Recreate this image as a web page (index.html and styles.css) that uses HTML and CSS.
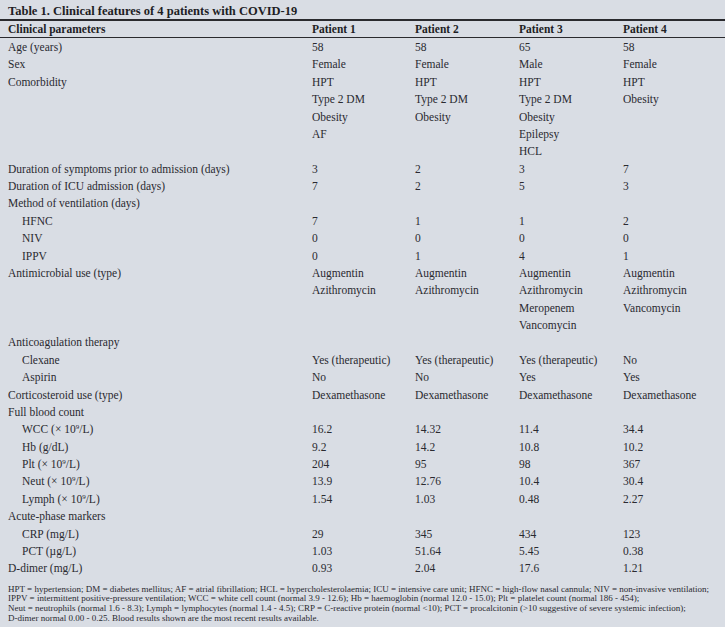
FILE: index.html
```html
<!DOCTYPE html>
<html lang="en">
<head>
<meta charset="utf-8">
<title>Table 1. Clinical features of 4 patients with COVID-19</title>
<link rel="stylesheet" href="styles.css">
</head>
<body>
<div class="page">
  <h1 class="caption">Table 1. Clinical features of 4 patients with COVID-19</h1>
  <table class="clin">
    <colgroup>
      <col class="c-label"><col class="c-p1"><col class="c-p2"><col class="c-p3"><col class="c-p4">
    </colgroup>
    <thead>
      <tr><th class="lbl">Clinical parameters</th><th>Patient 1</th><th>Patient 2</th><th>Patient 3</th><th>Patient 4</th></tr>
    </thead>
    <tbody>
      <tr><td class="lbl">Age (years)</td><td>58</td><td>58</td><td>65</td><td>58</td></tr>
      <tr><td class="lbl">Sex</td><td>Female</td><td>Female</td><td>Male</td><td>Female</td></tr>
      <tr><td class="lbl">Comorbidity</td><td>HPT<br>Type 2 DM<br>Obesity<br>AF</td><td>HPT<br>Type 2 DM<br>Obesity</td><td>HPT<br>Type 2 DM<br>Obesity<br>Epilepsy<br>HCL</td><td>HPT<br>Obesity</td></tr>
      <tr><td class="lbl">Duration of symptoms prior to admission (days)</td><td>3</td><td>2</td><td>3</td><td>7</td></tr>
      <tr><td class="lbl">Duration of ICU admission (days)</td><td>7</td><td>2</td><td>5</td><td>3</td></tr>
      <tr><td class="lbl">Method of ventilation (days)</td><td></td><td></td><td></td><td></td></tr>
      <tr><td class="lbl sub">HFNC</td><td>7</td><td>1</td><td>1</td><td>2</td></tr>
      <tr><td class="lbl sub">NIV</td><td>0</td><td>0</td><td>0</td><td>0</td></tr>
      <tr><td class="lbl sub">IPPV</td><td>0</td><td>1</td><td>4</td><td>1</td></tr>
      <tr><td class="lbl">Antimicrobial use (type)</td><td>Augmentin<br>Azithromycin</td><td>Augmentin<br>Azithromycin</td><td>Augmentin<br>Azithromycin<br>Meropenem<br>Vancomycin</td><td>Augmentin<br>Azithromycin<br>Vancomycin</td></tr>
      <tr><td class="lbl">Anticoagulation therapy</td><td></td><td></td><td></td><td></td></tr>
      <tr><td class="lbl sub">Clexane</td><td>Yes (therapeutic)</td><td>Yes (therapeutic)</td><td>Yes (therapeutic)</td><td>No</td></tr>
      <tr><td class="lbl sub">Aspirin</td><td>No</td><td>No</td><td>Yes</td><td>Yes</td></tr>
      <tr><td class="lbl">Corticosteroid use (type)</td><td>Dexamethasone</td><td>Dexamethasone</td><td>Dexamethasone</td><td>Dexamethasone</td></tr>
      <tr><td class="lbl">Full blood count</td><td></td><td></td><td></td><td></td></tr>
      <tr><td class="lbl sub">WCC (× 10<sup>9</sup>/L)</td><td>16.2</td><td>14.32</td><td>11.4</td><td>34.4</td></tr>
      <tr><td class="lbl sub">Hb (g/dL)</td><td>9.2</td><td>14.2</td><td>10.8</td><td>10.2</td></tr>
      <tr><td class="lbl sub">Plt (× 10<sup>9</sup>/L)</td><td>204</td><td>95</td><td>98</td><td>367</td></tr>
      <tr><td class="lbl sub">Neut (× 10<sup>9</sup>/L)</td><td>13.9</td><td>12.76</td><td>10.4</td><td>30.4</td></tr>
      <tr><td class="lbl sub">Lymph (× 10<sup>9</sup>/L)</td><td>1.54</td><td>1.03</td><td>0.48</td><td>2.27</td></tr>
      <tr><td class="lbl">Acute-phase markers</td><td></td><td></td><td></td><td></td></tr>
      <tr><td class="lbl sub">CRP (mg/L)</td><td>29</td><td>345</td><td>434</td><td>123</td></tr>
      <tr><td class="lbl sub">PCT (µg/L)</td><td>1.03</td><td>51.64</td><td>5.45</td><td>0.38</td></tr>
      <tr><td class="lbl">D-dimer (mg/L)</td><td>0.93</td><td>2.04</td><td>17.6</td><td>1.21</td></tr>
    </tbody>
  </table>
  <p class="notes">HPT = hypertension; DM = diabetes mellitus; AF = atrial fibrillation; HCL = hypercholesterolaemia; ICU = intensive care unit; HFNC = high-flow nasal cannula; NIV = non-invasive ventilation;<br>IPPV = intermittent positive-pressure ventilation; WCC = white cell count (normal 3.9 - 12.6); Hb = haemoglobin (normal 12.0 - 15.0); Plt = platelet count (normal 186 - 454);<br>Neut = neutrophils (normal 1.6 - 8.3); Lymph = lymphocytes (normal 1.4 - 4.5); CRP = C-reactive protein (normal &lt;10); PCT = procalcitonin (&gt;10 suggestive of severe systemic infection);<br>D-dimer normal 0.00 - 0.25. Blood results shown are the most recent results available.</p>
</div>
</body>
</html>
```

FILE: styles.css
```css
html, body {
  margin: 0;
  padding: 0;
  background: #d9dde4;
}

.page {
  width: 725px;
  height: 627px;
  background: #d9dde4;
  color: #2a2a30;
  font-family: "Liberation Serif", "Times New Roman", serif;
  overflow: hidden;
}

.caption {
  margin: 0;
  padding: 4px 0 0 8px;
  height: 15px;
  font-size: 12.5px;
  line-height: 15px;
  font-weight: bold;
  color: #1e1e24;
  border-bottom: 2px solid #2a2a2e;
}

.clin {
  width: 725px;
  border-collapse: collapse;
  table-layout: fixed;
  font-size: 11.5px;
  line-height: 17.37px;
}

.c-label { width: 312px; }
.c-p1 { width: 103px; }
.c-p2 { width: 104px; }
.c-p3 { width: 104px; }
.c-p4 { width: 102px; }

.clin th {
  text-align: left;
  font-weight: bold;
  padding: 0;
  height: 16px;
  line-height: 16px;
  color: #1e1e24;
  border-bottom: 1px solid #2a2a2e;
}

.clin tbody tr:first-child td {
  padding-top: 1px;
}

.clin td {
  padding: 0;
  vertical-align: top;
  white-space: nowrap;
}

.clin .lbl {
  padding-left: 8px;
}

.clin .sub {
  padding-left: 22px;
}

.clin sup {
  font-size: 7px;
  line-height: 0;
  vertical-align: 4px;
}

.notes {
  margin: 7px 0 0 8px;
  font-size: 9px;
  line-height: 9.8px;
  white-space: nowrap;
  color: #2a2a30;
}
```
